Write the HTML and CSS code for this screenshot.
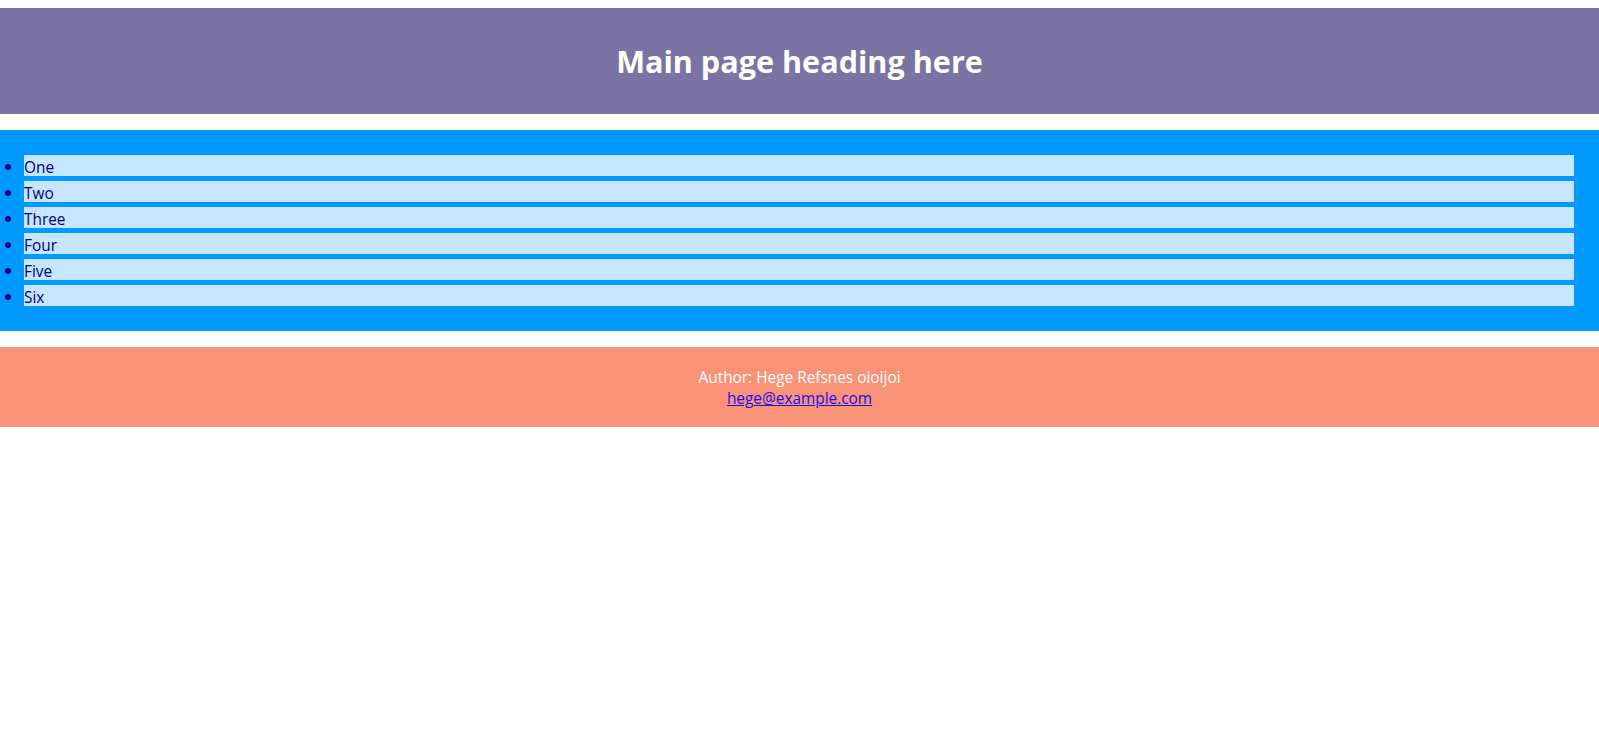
FILE: index.html
```html
<!DOCTYPE html>
<html lang="en">
<head>
<meta charset="utf-8">
<title>Main page</title>
<link rel="stylesheet" href="styles.css">
</head>
<body>
<header class="masthead">
  <h1 class="masthead-title">Main page heading here</h1>
</header>
<section class="listing">
  <ul class="items">
    <li class="item">One</li>
    <li class="item">Two</li>
    <li class="item">Three</li>
    <li class="item">Four</li>
    <li class="item">Five</li>
    <li class="item">Six</li>
  </ul>
</section>
<footer class="footer">
  <p class="footer-line">Author: Hege Refsnes oioijoi</p>
  <p class="footer-line"><a class="footer-link" href="mailto:hege@example.com">hege@example.com</a></p>
</footer>
</body>
</html>
```

FILE: styles.css
```css
html, body {
  background: #ffffff;
}
body {
  margin: 8px 0 0 0;
  font-family: "Open Sans", "Noto Sans", sans-serif;
  font-size: 15.4px;
  line-height: 21px;
  display: flex;
  flex-direction: column;
  gap: 16px;
}
.masthead {
  background: #7b73a3;
  height: 106px;
  display: flex;
  align-items: center;
  justify-content: center;
}
.masthead-title {
  margin: 0;
  color: #ffffff;
  font-size: 30.6px;
  line-height: 43px;
  font-weight: 700;
}
.listing {
  background: #0099ff;
  padding: 25px 25px 25px 0;
}
.items {
  margin: 0;
  padding-left: 24px;
  color: #000080;
}
.item {
  background: #c5e6fd;
  height: 21px;
  line-height: 23px;
}
.item::marker {
  font-size: 18px;
}
.item + .item {
  margin-top: 5px;
}
.footer {
  background: #f99378;
  padding: 20px 0 18px;
  text-align: center;
  color: #ffffff;
}
.footer-line {
  margin: 0;
}
.footer-link {
  color: #1a0dee;
}
```
